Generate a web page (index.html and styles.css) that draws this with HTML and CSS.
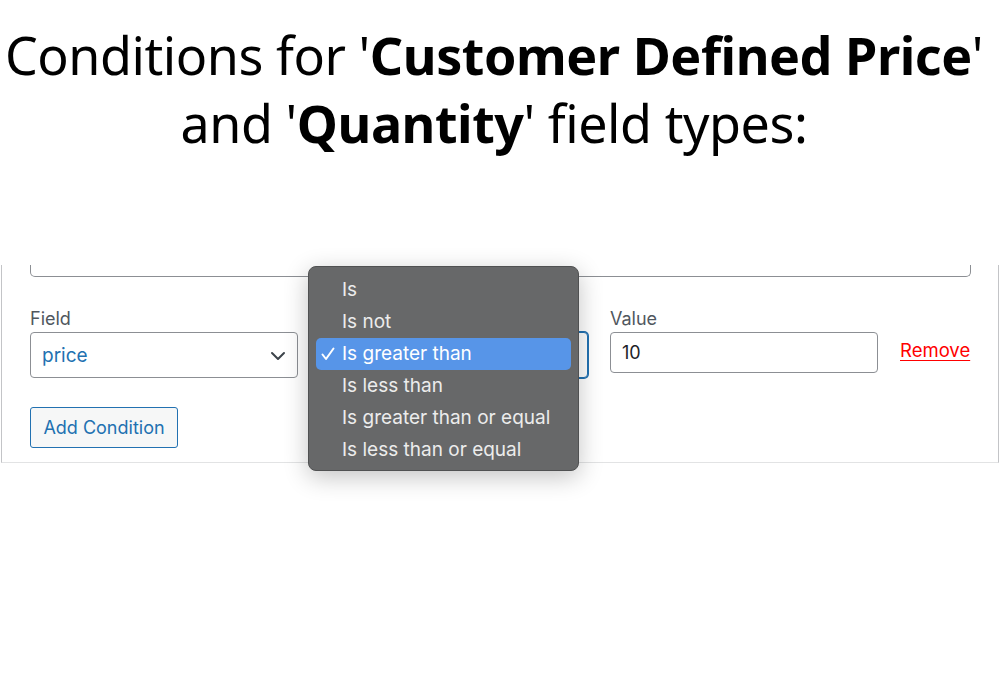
FILE: index.html
```html
<!DOCTYPE html>
<html>
<head>
<meta charset="utf-8">
<link rel="stylesheet" href="styles.css">
</head>
<body>
<h1 class="title">Conditions for '<b>Customer Defined Price</b>'<br>and '<b>Quantity</b>' field types:</h1>

<div class="stage">
  <div class="panel">
    <div class="top-input"></div>
    <div class="row">
      <div class="col">
        <label class="label">Field</label>
        <div class="select">
          <span class="select-text">price</span>
          <svg class="chev" width="16" height="10" viewBox="0 0 16 10"><path d="M2 2 L8 8 L14 2" fill="none" stroke="#3c434a" stroke-width="2" stroke-linecap="round" stroke-linejoin="round"/></svg>
        </div>
      </div>
      <div class="col">
        <div class="label-space"></div>
        <div class="select focused"></div>
      </div>
      <div class="col">
        <label class="label">Value</label>
        <div class="input">10</div>
      </div>
      <div class="col remove-col">
        <a class="remove" href="#">Remove</a>
      </div>
    </div>
    <button class="add-btn">Add Condition</button>
  </div>

  <div class="menu">
    <div class="item">Is</div>
    <div class="item">Is not</div>
    <div class="item selected"><svg class="check" width="14" height="14" viewBox="0 0 14 14"><path d="M1.5 7.5 L5 12 L12.5 1.5" fill="none" stroke="#ffffff" stroke-width="2" stroke-linecap="round" stroke-linejoin="round"/></svg>Is greater than</div>
    <div class="item">Is less than</div>
    <div class="item">Is greater than or equal</div>
    <div class="item">Is less than or equal</div>
  </div>
</div>
</body>
</html>
```

FILE: styles.css
```css
* { box-sizing: border-box; }

html, body {
  margin: 0;
  background: #ffffff;
  font-family: Inter, "Liberation Sans", sans-serif;
}

.title {
  margin: 0;
  padding: 21px 12px 0 0;
  height: 265px;
  text-align: center;
  font-family: "Noto Sans", sans-serif;
  font-weight: 400;
  font-size: 52px;
  line-height: 68px;
  color: #000;
  letter-spacing: -0.45px;
}

.title b { font-weight: 700; }

.stage {
  position: relative;
  height: 435px;
}

.panel {
  margin: 0 1px;
  height: 198px;
  border-left: 1px solid #c3c4c7;
  border-right: 1px solid #c3c4c7;
  border-bottom: 1px solid #e2e3e4;
  padding: 0 27px 0 28px;
}

.top-input {
  height: 12px;
  border: 1px solid #8c8f94;
  border-top: none;
  border-radius: 0 0 5px 5px;
}

.row {
  display: grid;
  grid-template-columns: 268px 268px 268px auto;
  column-gap: 22px;
  margin-top: 29px;
}

.col {
  display: flex;
  flex-direction: column;
}

.label {
  font-size: 18px;
  line-height: 25px;
  color: #50575e;
  margin-bottom: 1px;
}

.label-space {
  height: 26px;
}

.select {
  position: relative;
  height: 46px;
  border: 1px solid #8c8f94;
  border-radius: 4px;
  display: flex;
  align-items: center;
  padding-left: 11px;
  background: #fff;
}

.select.focused {
  border-color: #2271b1;
  box-shadow: 0 0 0 1px #2271b1;
}

.select-text {
  font-size: 19px;
  color: #2271b1;
}

.chev {
  position: absolute;
  right: 11px;
  top: 18px;
}

.input {
  height: 41px;
  border: 1px solid #8c8f94;
  border-radius: 4px;
  display: flex;
  align-items: center;
  padding-left: 11px;
  font-size: 18px;
  color: #1d2327;
}

.remove-col {
  justify-content: flex-start;
  padding-top: 24px;
}

.remove {
  font-size: 18.5px;
  line-height: 41px;
  color: #ff0000;
  text-decoration: underline;
  text-underline-offset: 3px;
}

.add-btn {
  margin-top: 29px;
  width: 148px;
  height: 41px;
  border: 1px solid #2271b1;
  border-radius: 3px;
  background: #f6f7f7;
  color: #2271b1;
  font-family: Inter, "Liberation Sans", sans-serif;
  font-size: 18px;
  padding: 0;
}

.menu {
  position: absolute;
  z-index: 5;
  left: 308px;
  top: 1px;
  width: 271px;
  height: 205px;
  background: #676869;
  border: 1px solid #505152;
  border-radius: 8px;
  padding: 7px 7px 0 7px;
  box-shadow: 0 6px 24px rgba(0, 0, 0, 0.24);
}

.item {
  position: relative;
  height: 32px;
  line-height: 32px;
  padding-left: 26px;
  font-size: 19px;
  color: #ececec;
  border-radius: 5px;
}

.item.selected {
  background: #5795e8;
  color: #ffffff;
}

.check {
  position: absolute;
  left: 5px;
  top: 9px;
}
```
